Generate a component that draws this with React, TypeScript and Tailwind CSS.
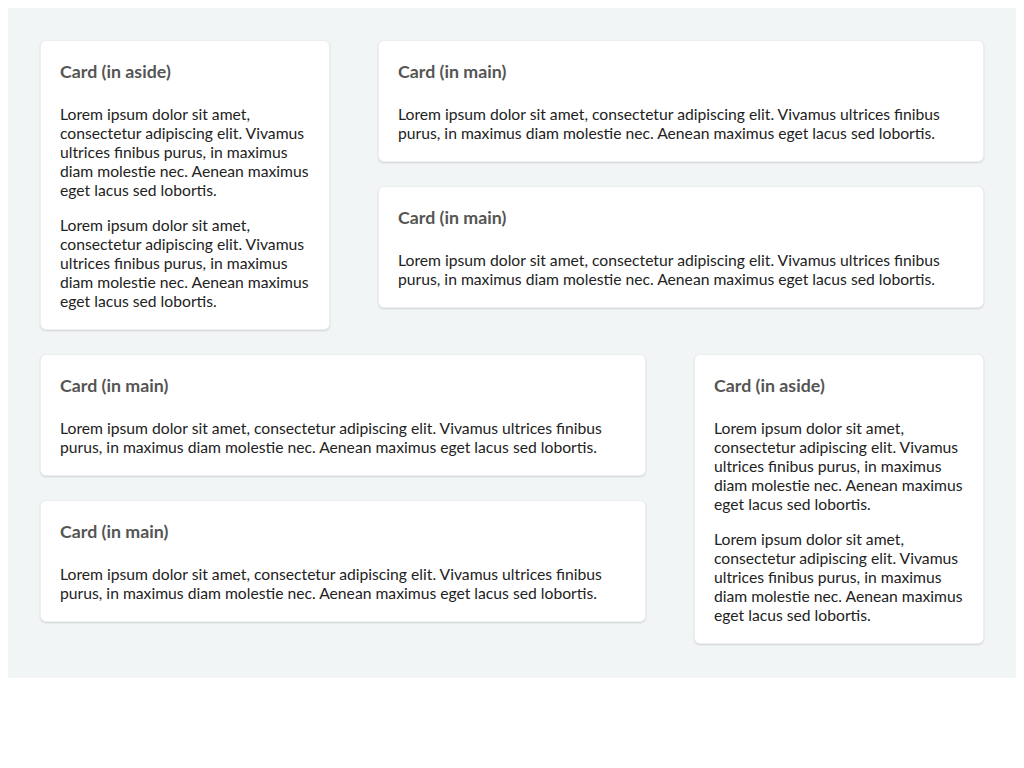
const LOREM =
  "Lorem ipsum dolor sit amet, consectetur adipiscing elit. Vivamus ultrices finibus purus, in maximus diam molestie nec. Aenean maximus eget lacus sed lobortis.";

function Card({ title, paragraphs = 1 }: { title: string; paragraphs?: number }) {
  return (
    <div className="bg-white rounded-md border border-[#eceeef] shadow-[0_1px_2px_rgba(0,0,0,0.14)] px-[19px] pt-[18px] pb-[18px]">
      <h2 className="text-[17.8px] leading-6 font-bold text-[#555]">{title}</h2>
      <div className="mt-[22px] flex flex-col gap-4">
        {Array.from({ length: paragraphs }).map((_, i) => (
          <p key={i} className="text-[15.7px] leading-[19px] text-[#222]">
            {LOREM}
          </p>
        ))}
      </div>
    </div>
  );
}

export default function App() {
  return (
    <div className="p-2 bg-white min-h-screen" style={{ fontFamily: "Lato, 'Liberation Sans', sans-serif" }}>
      <div className="bg-[#f2f5f6] px-8 pt-8 pb-[34px] flex flex-col gap-6">
        <div className="grid grid-cols-[290px_1fr] gap-x-12 items-start">
          <Card title="Card (in aside)" paragraphs={2} />
          <div className="flex flex-col gap-6">
            <Card title="Card (in main)" />
            <Card title="Card (in main)" />
          </div>
        </div>
        <div className="grid grid-cols-[1fr_290px] gap-x-12 items-start">
          <div className="flex flex-col gap-6">
            <Card title="Card (in main)" />
            <Card title="Card (in main)" />
          </div>
          <Card title="Card (in aside)" paragraphs={2} />
        </div>
      </div>
    </div>
  );
}
